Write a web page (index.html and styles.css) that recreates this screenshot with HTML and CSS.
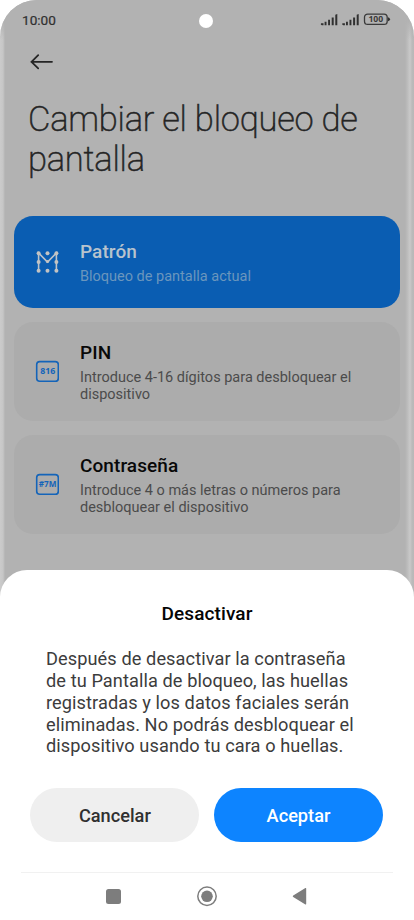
FILE: index.html
```html
<!DOCTYPE html>
<html lang="es">
<head>
<meta charset="utf-8">
<title>Cambiar el bloqueo de pantalla</title>
<link rel="stylesheet" href="styles.css">
</head>
<body>
<div class="phone">
  <header class="status">
    <span class="clock">10:00</span>
    <span class="camera"></span>
    <svg class="indicators" width="72" height="14" viewBox="0 0 72 14">
      <g fill="#303030">
        <path id="bars" d="M1 10.3h2.5v1.9H1.8q-1.6-.5-.8-1.9zM4.6 8.7h1.9v3.5H4.6zM8.1 6.8H10v5.4H8.1zM11.7 4.6h2v7.6h-2zM15.3 1.7l2-.7v11.2h-2z"/>
        <use href="#bars" x="21.4"/>
        <path d="M68 4.3q2 .3 2 2t-2 2z"/>
      </g>
      <rect x="44.5" y="1.1" width="22.7" height="10.3" rx="3.2" fill="none" stroke="#3a3a3a" stroke-width="1.3"/>
      <text x="48.4" y="9.4" class="battery" textLength="14.8" lengthAdjust="spacingAndGlyphs">100</text>
    </svg>
  </header>
  <nav class="topbar">
    <svg width="24" height="18" viewBox="0 0 24 18" fill="none" stroke="#252525" stroke-width="1.8" stroke-linecap="round" stroke-linejoin="round"><path d="M22 8.8H1.3M8.2 2.2L1.5 8.8l6.7 6.6"/></svg>
  </nav>
  <h1>Cambiar el bloqueo de<br>pantalla</h1>
  <main class="options">
    <section class="option current">
      <svg width="24" height="24" viewBox="0 0 24 24">
        <path d="M3.6 21V3l8.9 9L21.4 3v18" fill="none" stroke="#bdc3c9" stroke-width="1.6"/>
        <g fill="#c3c3c3"><circle cx="3.6" cy="3.2" r="2"/><circle cx="12.5" cy="3.2" r="2"/><circle cx="21.4" cy="3.2" r="2"/><circle cx="3.6" cy="12" r="2"/><circle cx="12.5" cy="11.5" r="1.6"/><circle cx="21.4" cy="12" r="2"/><circle cx="3.6" cy="20.7" r="2"/><circle cx="12.5" cy="20.7" r="2"/><circle cx="21.4" cy="20.7" r="2"/></g>
      </svg>
      <div class="copy"><h2>Patrón</h2><p>Bloqueo de pantalla actual</p></div>
    </section>
    <section class="option">
      <svg width="24" height="24" viewBox="0 0 24 24"><rect x="1.7" y="1.6" width="21.6" height="19.7" rx="3" class="frame"/><text x="5.2" y="14.3" class="code" textLength="15" lengthAdjust="spacingAndGlyphs">816</text></svg>
      <div class="copy"><h2>PIN</h2><p>Introduce 4-16 dígitos para desbloquear el<br>dispositivo</p></div>
    </section>
    <section class="option">
      <svg width="24" height="24" viewBox="0 0 24 24"><rect x="1.7" y="1.6" width="21.6" height="19.7" rx="3" class="frame"/><text x="3.8" y="14.3" class="code" textLength="17.6" lengthAdjust="spacingAndGlyphs">#7M</text></svg>
      <div class="copy"><h2>Contraseña</h2><p>Introduce 4 o más letras o números para<br>desbloquear el dispositivo</p></div>
    </section>
  </main>
  <section class="sheet">
    <h3>Desactivar</h3>
    <p>Después de desactivar la contraseña<br>de tu Pantalla de bloqueo, las huellas<br>registradas y los datos faciales serán<br>eliminadas. No podrás desbloquear el<br>dispositivo usando tu cara o huellas.</p>
    <div class="actions"><button>Cancelar</button><button class="primary">Aceptar</button></div>
    <footer>
      <svg width="372" height="47" viewBox="0 0 372 47" fill="#7d7d7d">
        <rect x="85" y="16" width="15" height="15" rx="2.5"/>
        <circle cx="186" cy="23.3" r="9.2" fill="none" stroke="#7d7d7d" stroke-width="1.5"/>
        <circle cx="186" cy="23.3" r="5.8"/>
        <path d="M272.2 22.4L284.4 15q.8-.4.8.6v15.2q0 1-.8.6l-12.2-7.4q-1-.8 0-1.6z"/>
      </svg>
    </footer>
  </section>
</div>
</body>
</html>
```
FILE: styles.css
```css
* { box-sizing: border-box; }
body { margin: 0; background: #fff; font-family: Roboto, "Liberation Sans", sans-serif; }
h1, h2, h3, p { margin: 0; white-space: nowrap; }
svg { display: block; flex: none; }
.phone {
  width: 414px;
  height: 920px;
  display: flex;
  flex-direction: column;
  overflow: hidden;
  border-radius: 37px 37px 0 0;
  background: linear-gradient(90deg, #cbcbcb 0, #c6c6c6 3px, #b2b2b2 5px, #b2b2b2 405px, #bababa 407px, #c9c9c9 410px, #bababa 412px, #b8b8b8 414px);
}
.status {
  height: 40px;
  padding: 0 22px;
  display: grid;
  grid-template-columns: 1fr 14px 1fr;
  align-items: center;
  background: linear-gradient(#b2b2b2 20px, transparent 40px);
}
.clock { color: #303030; font-size: 13.6px; font-weight: 400; -webkit-text-stroke: .2px #303030; }
.camera { width: 14px; height: 14px; border-radius: 50%; background: #fff; margin: 2px 0 0 -1px; }
.indicators { justify-self: end; }
.battery { font: 700 8.5px "Open Sans", sans-serif; fill: #3a3a3a; }
.topbar { height: 60px; padding: 13px 0 0 30px; }
h1 {
  height: 116px;
  padding-left: 28px;
  font-size: 34.5px;
  letter-spacing: -.22px;
  line-height: 39.5px;
  font-weight: 200;
  color: #242424;
  -webkit-text-stroke: .5px #242424;
}
.options { padding: 0 14px; display: grid; gap: 14px; }
.option {
  height: 99px;
  padding-left: 21px;
  border-radius: 19px;
  background: #acacac;
  display: flex;
  align-items: center;
  gap: 21px;
}
.option.current { height: 92px; background: #0a5db2; }
.option h2 { font-size: 19px; line-height: 24px; font-weight: 500; letter-spacing: .08px; color: #080808; }
.option p { margin-top: 4px; font-size: 14.5px; line-height: 17px; color: #4b4b4b; }
.option.current h2 { color: #b8c3cd; }
.option.current p { color: #6b96bd; }
.frame { fill: none; stroke: #1464b9; stroke-width: 1.6; }
.code { font: 700 8.5px "Open Sans", sans-serif; fill: #1464b9; }
.sheet {
  margin-top: 36px;
  height: 350px;
  padding-top: 32px;
  border-radius: 27px 27px 0 0;
  background: #fff;
}
.sheet h3 { font-size: 19px; line-height: 24px; font-weight: 500; letter-spacing: .1px; text-align: center; color: #050505; }
.sheet p { margin: 21.8px 0 0 46px; font-size: 18.2px; letter-spacing: .08px; line-height: 21.9px; color: #3c3c3c; }
.actions { margin: 30.7px 30.4px 0; display: grid; grid-template-columns: 169px 169px; gap: 14.6px; }
button {
  height: 54px;
  border: 0;
  padding: 0;
  border-radius: 27px;
  font: 500 18.2px Roboto, sans-serif;
  color: #303030;
  background: #efefef;
}
.primary { background: #0d84ff; color: #fff; }
footer { margin: 29.5px 21px 0; border-top: 1px solid #f1f1f1; }
```
